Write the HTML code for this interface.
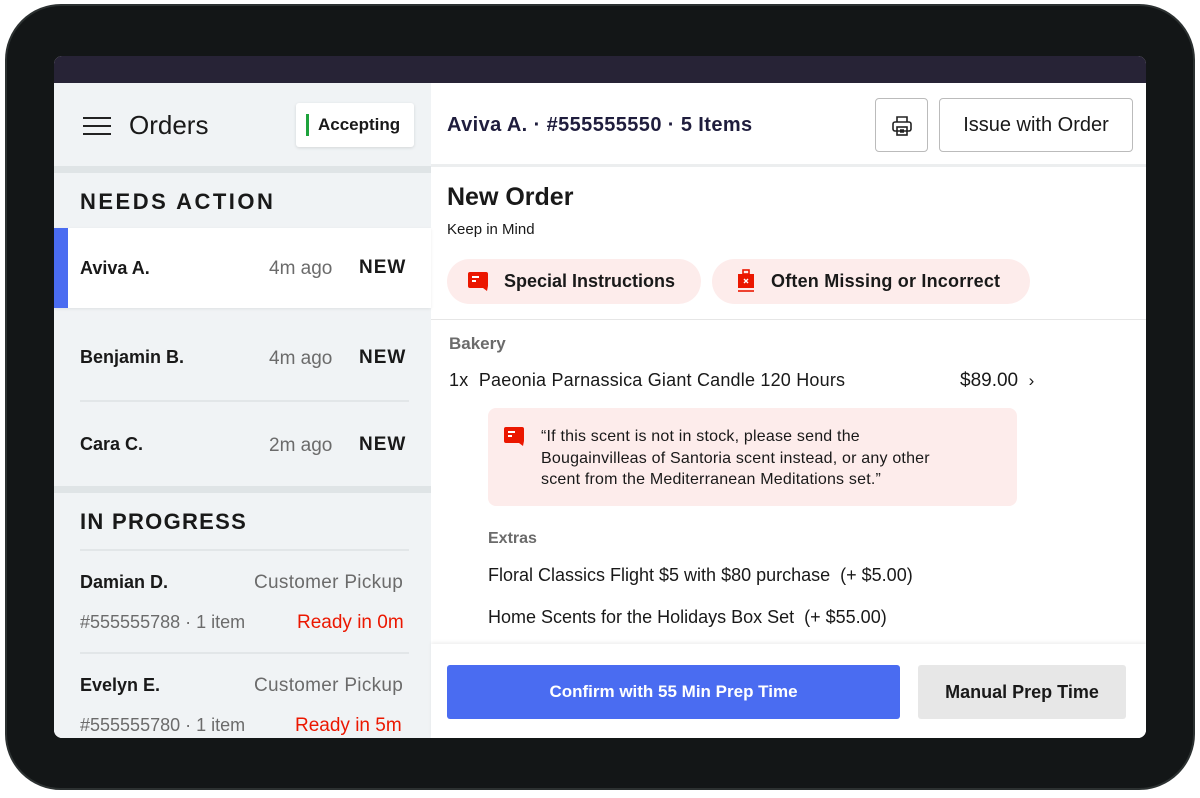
<!DOCTYPE html>
<html><head><meta charset="utf-8"><style>
*{margin:0;padding:0;box-sizing:border-box}
body{width:1200px;height:798px;background:#fff;font-family:"Liberation Sans",sans-serif;color:#191919;position:relative;overflow:hidden}
.frame{position:absolute;left:5px;top:4px;width:1190px;height:786px;border-radius:56px;background:#131617;border:2px solid #2c3131}
.screen{position:absolute;left:54px;top:56px;width:1092px;height:682px;border-radius:8px;overflow:hidden;background:#fff}
.topbar{position:absolute;left:0;top:0;width:100%;height:27px;background:#272336}
.left{position:absolute;left:0;top:27px;width:377px;height:655px;background:#f0f3f5}
.abs{position:absolute;white-space:nowrap}
.b{font-weight:bold}
.g{color:#6b6b6b}
.r{color:#eb1700}
.line{position:absolute;height:2px;background:#e2e6e8}
.chip{position:absolute;height:45px;border-radius:23px;background:#fdeceb;font-size:18px;font-weight:bold;line-height:45px}
</style></head><body>
<div class="frame"></div>
<div class="screen">
<div class="topbar"></div>
<div class="left">
 <div class="abs" style="left:29px;top:34px;width:28px;height:18px;border-top:2px solid #222;border-bottom:2px solid #222"><div style="margin-top:6px;height:2px;background:#222"></div></div>
 <div class="abs" style="left:75px;top:27px;font-size:26px">Orders</div>
 <div class="abs" style="left:242px;top:20px;width:118px;height:44px;background:#fff;border-radius:3px;box-shadow:0 1px 3px rgba(0,0,0,.12)">
  <div class="abs" style="left:10px;top:11px;width:3px;height:22px;background:#1ea33c"></div>
  <div class="abs b" style="left:22px;top:12px;font-size:17px">Accepting</div></div>
 <div class="abs" style="left:0;top:83px;width:377px;height:7px;background:#dfe4e6"></div>
 <div class="abs b" style="left:26px;top:106px;font-size:22px;letter-spacing:2.5px">NEEDS ACTION</div>
 <div class="abs" style="left:0;top:145px;width:377px;height:80px;background:#fff;box-shadow:0 1px 3px rgba(0,0,0,.08)">
  <div class="abs" style="left:0;top:0;width:14px;height:80px;background:#4a6cf1"></div>
  <div class="abs b" style="left:26px;top:30px;font-size:18px">Aviva A.</div>
  <div class="abs g" style="left:215px;top:30px;font-size:19px">4m ago</div>
  <div class="abs b" style="left:305px;top:29px;font-size:19px;letter-spacing:1px">NEW</div></div>
 <div class="abs b" style="left:26px;top:264px;font-size:18px">Benjamin B.</div>
 <div class="abs g" style="left:215px;top:265px;font-size:19px">4m ago</div>
 <div class="abs b" style="left:305px;top:264px;font-size:19px;letter-spacing:1px">NEW</div>
 <div class="line" style="left:26px;top:317px;width:329px"></div>
 <div class="abs b" style="left:26px;top:351px;font-size:18px">Cara C.</div>
 <div class="abs g" style="left:215px;top:352px;font-size:19px">2m ago</div>
 <div class="abs b" style="left:305px;top:351px;font-size:19px;letter-spacing:1px">NEW</div>
 <div class="abs" style="left:0;top:403px;width:377px;height:7px;background:#dfe4e6"></div>
 <div class="abs b" style="left:26px;top:426px;font-size:22px;letter-spacing:1.3px">IN PROGRESS</div>
 <div class="line" style="left:26px;top:466px;width:329px"></div>
 <div class="abs b" style="left:26px;top:489px;font-size:18px">Damian D.</div>
 <div class="abs g" style="left:200px;top:489px;font-size:19px;letter-spacing:.3px">Customer Pickup</div>
 <div class="abs g" style="left:26px;top:529px;font-size:18px">#555555788 · 1 item</div>
 <div class="abs r" style="left:243px;top:529px;font-size:19px">Ready in 0m</div>
 <div class="line" style="left:26px;top:569px;width:329px"></div>
 <div class="abs b" style="left:26px;top:592px;font-size:18px">Evelyn E.</div>
 <div class="abs g" style="left:200px;top:592px;font-size:19px;letter-spacing:.3px">Customer Pickup</div>
 <div class="abs g" style="left:26px;top:632px;font-size:18px">#555555780 · 1 item</div>
 <div class="abs r" style="left:241px;top:632px;font-size:19px">Ready in 5m</div>
</div>
<!-- right -->
<div class="abs b" style="left:393px;top:58px;font-size:20px;color:#1f1d3d;letter-spacing:.4px">Aviva A. · #555555550 · 5 Items</div>
<div class="abs" style="left:821px;top:42px;width:53px;height:54px;border:1px solid #bbb;border-radius:4px">
 <svg width="24" height="24" viewBox="0 0 24 24" style="position:absolute;left:14px;top:15px" fill="none" stroke="#222" stroke-width="1.6"><path d="M7 8V3h10v5"/><rect x="3" y="8" width="18" height="9" rx="2"/><rect x="7" y="13" width="10" height="8"/><path d="M10 16h4M10 18h4"/></svg></div>
<div class="abs" style="left:885px;top:42px;width:194px;height:54px;border:1px solid #bbb;border-radius:4px;font-size:20px;line-height:52px;text-align:center">Issue with Order</div>
<div class="abs" style="left:377px;top:108px;width:715px;height:3px;background:#eceeef"></div>
<div class="abs b" style="left:393px;top:127px;font-size:25px">New Order</div>
<div class="abs" style="left:393px;top:165px;font-size:15px">Keep in Mind</div>
<div class="chip" style="left:393px;top:203px;width:254px"><svg width="22" height="22" viewBox="0 0 22 22" style="position:absolute;left:20px;top:11px"><path d="M3 2h16a2 2 0 0 1 2 2v12l-1 5-4-3H3a2 2 0 0 1-2-2V4a2 2 0 0 1 2-2z" fill="#eb1700"/><path d="M5 7h7M5 11h4" stroke="#fff" stroke-width="2"/></svg><span style="position:absolute;left:57px;font-size:18px">Special Instructions</span></div>
<div class="chip" style="left:658px;top:203px;width:318px"><svg width="20" height="24" viewBox="0 0 20 24" style="position:absolute;left:24px;top:10px"><rect x="7" y="1" width="6" height="4" fill="none" stroke="#eb1700" stroke-width="1.6"/><rect x="2" y="5" width="16" height="14" fill="#eb1700"/><path d="M8 10l4 4M12 10l-4 4" stroke="#fff" stroke-width="1.4"/><path d="M2 22h16" stroke="#eb1700" stroke-width="1.6"/></svg><span style="position:absolute;left:59px;font-size:18px;letter-spacing:.2px">Often Missing or Incorrect</span></div>
<div class="abs" style="left:377px;top:263px;width:715px;height:1px;background:#e6e6e6"></div>
<div class="abs b g" style="left:395px;top:278px;font-size:17px">Bakery</div>
<div class="abs" style="left:395px;top:314px;font-size:18px;letter-spacing:.2px">1x&nbsp;&nbsp;Paeonia Parnassica Giant Candle 120 Hours</div>
<div class="abs" style="left:906px;top:314px;font-size:19px">$89.00&nbsp; <span style="font-size:17px">›</span></div>
<div class="abs" style="left:434px;top:352px;width:529px;height:98px;background:#fdeceb;border-radius:8px">
 <svg width="22" height="22" viewBox="0 0 22 22" style="position:absolute;left:15px;top:17px"><path d="M3 2h16a2 2 0 0 1 2 2v12l-1 5-4-3H3a2 2 0 0 1-2-2V4a2 2 0 0 1 2-2z" fill="#eb1700"/><path d="M5 7h7M5 11h4" stroke="#fff" stroke-width="2"/></svg>
 <div class="abs" style="left:53px;top:18px;font-size:16px;line-height:21.5px;letter-spacing:.2px">“If this scent is not in stock, please send the<br>Bougainvilleas of Santoria scent instead, or any other<br>scent from the Mediterranean Meditations set.”</div></div>
<div class="abs b g" style="left:434px;top:474px;font-size:16px">Extras</div>
<div class="abs" style="left:434px;top:509px;font-size:18px">Floral Classics Flight $5 with $80 purchase&nbsp;&nbsp;(+ $5.00)</div>
<div class="abs" style="left:434px;top:551px;font-size:18px">Home Scents for the Holidays Box Set&nbsp;&nbsp;(+ $55.00)</div>
<div class="abs" style="left:377px;top:588px;width:715px;height:94px;background:#fff;box-shadow:0 -2px 3px rgba(0,0,0,.06)"></div>
<div class="abs b" style="left:393px;top:609px;width:453px;height:54px;background:#4a6cf1;border-radius:3px;color:#fff;font-size:17px;line-height:54px;text-align:center">Confirm with 55 Min Prep Time</div>
<div class="abs b" style="left:864px;top:609px;width:208px;height:54px;background:#e7e7e7;border-radius:3px;font-size:18px;line-height:54px;text-align:center">Manual Prep Time</div>
</div>
</body></html>
